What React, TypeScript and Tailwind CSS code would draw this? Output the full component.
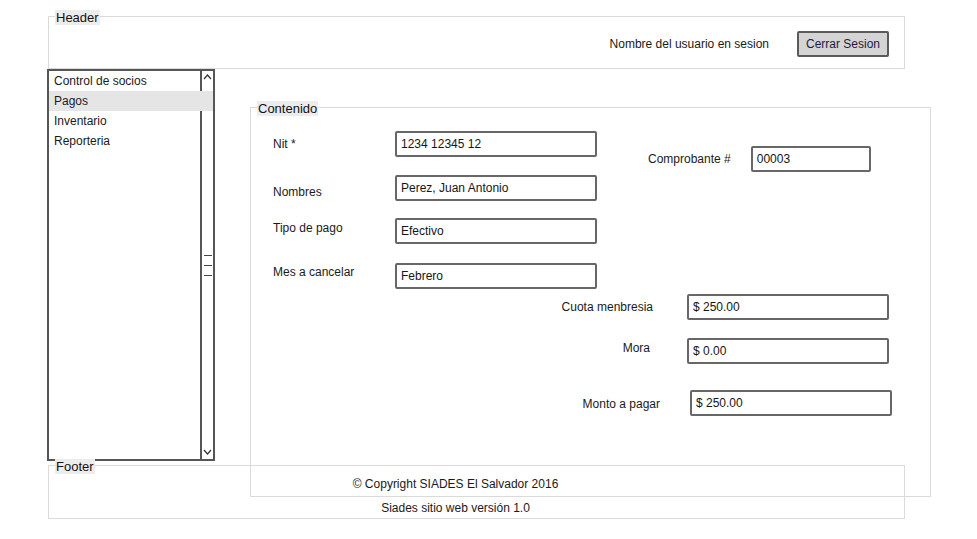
import React from "react";

const Label = ({ children }: { children: React.ReactNode }) => (
  <span className="absolute left-[6px] -top-[7px] bg-[#ececec] px-[1px] text-[13px] leading-[15px] text-[#111]">
    {children}
  </span>
);

const Field = ({ children, className = "" }: { children: React.ReactNode; className?: string }) => (
  <div
    className={`flex h-[26px] items-center rounded-[2px] border-2 border-[#676767] bg-white pl-[4px] text-[12px] text-[#151515] ${className}`}
  >
    {children}
  </div>
);

const leftRows = [
  { label: "Nit *", value: "1234 12345 12", mt: "mt-0", pt: "pt-[5px]" },
  { label: "Nombres", value: "Perez, Juan Antonio", mt: "mt-[18px]", pt: "pt-[9px]" },
  { label: "Tipo de pago", value: "Efectivo", mt: "mt-[17px]", pt: "pt-[2px]" },
  { label: "Mes a cancelar", value: "Febrero", mt: "mt-[19px]", pt: "pt-[1px]" },
];

const menu = ["Control de socios", "Pagos", "Inventario", "Reporteria"];

export default function App() {
  return (
    <div className="h-[539px] w-[977px] overflow-hidden bg-white pt-[16px] font-['Liberation_Sans',Arial,sans-serif] text-[#1a1a1a]">
      {/* Header */}
      <div className="relative ml-[48px] h-[53px] w-[857px] border border-[#dadada]">
        <Label>Header</Label>
        <div className="flex h-full items-center justify-end pr-[15px] pt-[2px]">
          <span className="mr-[28px] text-[12px]">Nombre del usuario en sesion</span>
          <button className="h-[26px] w-[92px] rounded-[2px] border-2 border-[#5a5a5a] bg-[#d4d4d4] text-[12px] text-[#1c1c3c]">
            Cerrar Sesion
          </button>
        </div>
      </div>

      <div className="flex">
        {/* Sidebar list */}
        <div className="relative ml-[47px] h-[392px] w-[168px] border-2 border-[#565656]">
          <div className="flex flex-col">
            {menu.map((m) => (
              <div
                key={m}
                className={`relative z-10 h-[20px] pl-[5px] text-[12px] leading-[20px] ${m === "Pagos" ? "bg-[#e5e5e5]" : ""}`}
              >
                {m}
              </div>
            ))}
          </div>
          <div className="absolute right-0 top-0 bottom-0 flex w-[13px] flex-col items-center border-l-2 border-[#565656]">
            <svg width="9" height="6" viewBox="0 0 9 6" className="mt-[3px]">
              <path d="M1 5 L4.5 1 L8 5" fill="none" stroke="#333" strokeWidth="1.2" />
            </svg>
            <div className="mt-[175px] flex flex-col gap-[9px]">
              <div className="h-px w-[8px] bg-[#444]" />
              <div className="h-px w-[8px] bg-[#444]" />
              <div className="h-px w-[8px] bg-[#444]" />
            </div>
            <svg width="9" height="6" viewBox="0 0 9 6" className="mt-auto mb-[4px]">
              <path d="M1 1 L4.5 5 L8 1" fill="none" stroke="#333" strokeWidth="1.2" />
            </svg>
          </div>
        </div>

        {/* Contenido */}
        <div className="relative ml-[35px] mt-[38px] h-[390px] w-[681px] border border-[#dadada] pt-[23px]">
          <Label>Contenido</Label>
          <div className="flex pl-[22px]">
            <div className="flex flex-col">
              {leftRows.map((r) => (
                <div key={r.label} className={`flex ${r.mt}`}>
                  <span className={`w-[122px] text-[12px] leading-[16px] ${r.pt}`}>{r.label}</span>
                  <Field className="w-[202px]">{r.value}</Field>
                </div>
              ))}
            </div>
            <div className="ml-[51px] mt-[15px] flex h-[26px] items-center">
              <span className="text-[12px]">Comprobante #</span>
              <Field className="ml-[20px] w-[120px]">00003</Field>
            </div>
          </div>

          <div className="mt-[5px] flex flex-col items-end">
            <div className="flex items-center pr-[41px]">
              <span className="mr-[34px] text-[12px]">Cuota menbresia</span>
              <Field className="w-[202px]">$ 250.00</Field>
            </div>
            <div className="mt-[18px] flex items-center pr-[41px]">
              <span className="mr-[37px] pb-[6px] text-[12px]">Mora</span>
              <Field className="w-[202px]">$ 0.00</Field>
            </div>
            <div className="mt-[26px] flex items-center pr-[38px]">
              <span className="mr-[30px] pt-[2px] text-[12px]">Monto a pagar</span>
              <Field className="w-[202px]">$ 250.00</Field>
            </div>
          </div>
        </div>
      </div>

      {/* Footer */}
      <div className="relative z-20 -mt-[32px] ml-[48px] h-[54px] w-[857px] border border-[#dadada]">
        <Label>Footer</Label>
        <div className="flex flex-col items-center gap-[8px] pr-[42px] pt-[10px] text-[12px] leading-[16px]">
          <span>© Copyright SIADES El Salvador 2016</span>
          <span>Siades sitio web versión 1.0</span>
        </div>
      </div>
    </div>
  );
}
